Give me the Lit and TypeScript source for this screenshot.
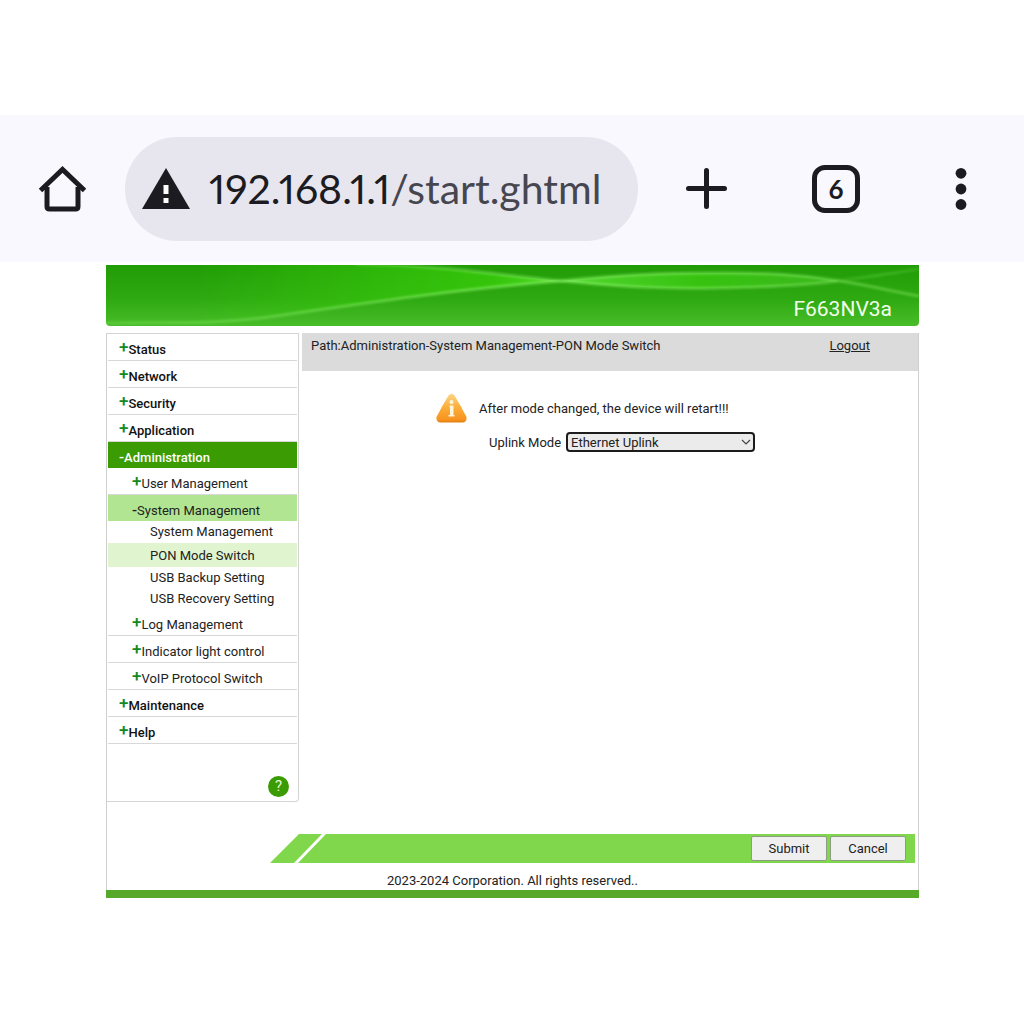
import { LitElement, html, css, svg, nothing } from "lit";
import { customElement, state } from "lit/decorators.js";
import { classMap } from "lit/directives/class-map.js";

interface NavItem {
  label: string;
  level: 1 | 2 | 3;
  open?: boolean;
  current?: boolean;
}

const NAV: NavItem[] = [
  { label: "Status", level: 1 },
  { label: "Network", level: 1 },
  { label: "Security", level: 1 },
  { label: "Application", level: 1 },
  { label: "Administration", level: 1, open: true },
  { label: "User Management", level: 2 },
  { label: "System Management", level: 2, open: true },
  { label: "System Management", level: 3 },
  { label: "PON Mode Switch", level: 3, current: true },
  { label: "USB Backup Setting", level: 3 },
  { label: "USB Recovery Setting", level: 3 },
  { label: "Log Management", level: 2 },
  { label: "Indicator light control", level: 2 },
  { label: "VoIP Protocol Switch", level: 2 },
  { label: "Maintenance", level: 1 },
  { label: "Help", level: 1 },
];

@customElement("browser-bar")
export class BrowserBar extends LitElement {
  static styles = css`
    :host {
      display: block;
      background: #f9f8fe;
    }
    .bar {
      display: flex;
      align-items: center;
      padding: 22px 44px 21px 38px;
    }
    button {
      display: grid;
      place-items: center;
      flex: none;
      width: 48px;
      height: 48px;
      margin: 0;
      padding: 0;
      border: 0;
      background: none;
      color: #1b1b21;
    }
    svg {
      display: block;
    }
    .address {
      display: flex;
      align-items: center;
      flex: 1;
      min-width: 0;
      height: 104px;
      box-sizing: border-box;
      margin: 0 44px 0 39px;
      padding: 0 16px;
      gap: 18px;
      border-radius: 52px;
      background: #e7e6ef;
      color: #1b1b21;
    }
    .address svg {
      flex: none;
    }
    .url {
      font: 400 41px/52px Lato, "Liberation Sans", sans-serif;
      font-variant-numeric: proportional-nums;
      white-space: nowrap;
    }
    .path {
      color: #46464f;
    }
    .actions {
      display: flex;
      gap: 82px;
    }
    .tabs {
      box-sizing: border-box;
      border: 5px solid #1b1b21;
      border-radius: 13px;
      font: 700 26px/30px Lato, "Liberation Sans", sans-serif;
    }
    .more {
      width: 38px;
    }
  `;

  render() {
    return html`
      <div class="bar">
        <button aria-label="Home">
          <svg width="48" height="48" viewBox="0 0 48 48" fill="none" stroke="currentColor" stroke-width="5">
            <path d="M9 22V41.5Q9 44 11.500 44H37.500Q40 44 40 41.500V22" />
            <path d="M2.500 25.500L24.500 4.500L46.500 25.500" stroke-linejoin="miter" />
          </svg>
        </button>
        <div class="address">
          <svg width="50" height="42" viewBox="0 0 50 42">
            <path d="M25 0L49 41H1Z" fill="currentColor" />
            <path d="M22.500 17h5v9h-5zM22.500 30h5v5h-5z" fill="#fff" />
          </svg>
          <span class="url">192.168.1.1<span class="path">/start.ghtml</span></span>
        </div>
        <div class="actions">
          <button aria-label="New tab">
            <svg width="48" height="48" viewBox="0 0 48 48" stroke="currentColor" stroke-width="5" stroke-linecap="round">
              <path d="M24.500 5.500V41.500M6.500 23.500H42.500" />
            </svg>
          </button>
          <button class="tabs">6</button>
          <button class="more" aria-label="Menu">
            <svg width="12" height="48" viewBox="0 0 12 48" fill="currentColor">
              <circle cx="6" cy="8.300" r="5.400" />
              <circle cx="6" cy="24" r="5.400" />
              <circle cx="6" cy="39.500" r="5.400" />
            </svg>
          </button>
        </div>
      </div>
    `;
  }
}

@customElement("device-banner")
export class DeviceBanner extends LitElement {
  static styles = css`
    :host {
      display: grid;
      height: 61px;
      overflow: hidden;
      border-radius: 0 0 4px 4px;
      background: linear-gradient(#219c06, #2ea911 55%, #48bd29);
    }
    svg,
    .model {
      grid-area: 1 / 1;
    }
    svg {
      width: 100%;
      height: 61px;
    }
    .model {
      place-self: end;
      padding: 0 27px 4px;
      color: #f2ffec;
      font: 400 21px/26px Roboto, "Liberation Sans", sans-serif;
    }
  `;

  render() {
    const rise = "C60 57 110 60 170 51C260 38 350 24 455 16";
    return html`
      <svg viewBox="0 0 813 61" preserveAspectRatio="none" aria-hidden="true">
        ${svg`
          <defs>
            <linearGradient id="left" x1="0" x2="1">
              <stop offset="0.200" stop-color="#38cc0a" stop-opacity="0" />
              <stop offset="0.850" stop-color="#36c80a" stop-opacity="0.900" />
              <stop offset="1" stop-color="#4fdc28" />
            </linearGradient>
            <linearGradient id="lens" x1="0" x2="1">
              <stop offset="0" stop-color="#52d630" />
              <stop offset="0.500" stop-color="#36c20f" />
              <stop offset="1" stop-color="#3cb81e" />
            </linearGradient>
            <linearGradient id="line" x1="0" x2="1">
              <stop offset="0" stop-color="#7be05a" stop-opacity="0.400" />
              <stop offset="0.500" stop-color="#7be85a" stop-opacity="0.700" />
              <stop offset="1" stop-color="#7be05a" stop-opacity="0.500" />
            </linearGradient>
            <filter id="soft"><feGaussianBlur stdDeviation="0.900" /></filter>
          </defs>
          <path d="M0 58${rise}C400 12 340 0 250 0H0Z" fill="url(#left)" />
          <path d="M455 16C520 9 560 8 620 8C680 8 710 11 732 16C710 19 670 22 610 23C560 24 520 22 455 16Z" fill="url(#lens)" />
          <g fill="none" stroke="url(#line)" stroke-width="3" filter="url(#soft)">
            <path d="M0 58${rise}C520 9 560 8 620 8C680 8 710 12 740 17C770 22 795 28 813 31" />
            <path d="M250 -1C340 0 400 11 455 16C520 22 560 24 610 23C670 22 710 19 732 16" />
            <path d="M732 16C760 12 790 8 813 4" stroke-opacity="0.400" />
          </g>
        `}
      </svg>
      <span class="model">F663NV3a</span>
    `;
  }
}

@customElement("side-nav")
export class SideNav extends LitElement {
  static styles = css`
    :host {
      display: block;
      box-sizing: border-box;
      border: 1px solid #d4d4d4;
      border-left: 0;
      border-radius: 0 0 4px 0;
      font: 400 13px/15px Roboto, "Liberation Sans", sans-serif;
    }
    ul {
      margin: 0;
      padding: 0;
      list-style: none;
    }
    a {
      display: flex;
      align-items: center;
      box-sizing: border-box;
      min-height: 27px;
      margin: 0 1px;
      border-bottom: 1px solid #d8d8d8;
      color: #222;
      text-decoration: none;
    }
    .level1 {
      padding-left: 11px;
      color: #111;
      font-weight: 500;
    }
    .level2 {
      padding-left: 24px;
    }
    .level3 {
      min-height: 21px;
      padding-left: 42px;
      border-bottom: 0;
    }
    .label {
      padding-top: 4px;
    }
    .level3 .label {
      padding-top: 0;
    }
    .sign {
      color: #128a1f;
      font-size: 17px;
      font-weight: 500;
    }
    .level1.open {
      min-height: 26px;
      border-bottom: 0;
      background: #3a9c02;
      color: #fff;
    }
    .level2.open {
      min-height: 26px;
      border-bottom: 0;
      background: #b2e592;
    }
    .open .sign {
      color: inherit;
      font-size: 15px;
    }
    .current {
      min-height: 24px;
      margin: 1px 1px 0;
      background: #e0f4d0;
    }
    .help {
      display: flex;
      justify-content: flex-end;
      padding: 32px 9px 4px;
    }
    .help button {
      width: 21px;
      height: 21px;
      padding: 0;
      border: 0;
      border-radius: 50%;
      background: #3a9c02;
      color: #e2f8d4;
      font: 400 15px/21px Roboto, "Liberation Sans", sans-serif;
    }
  `;

  render() {
    return html`
      <nav>
        <ul>
          ${NAV.map(
            (item) => html`
              <li>
                <a
                  href="#"
                  class=${classMap({
                    [`level${item.level}`]: true,
                    open: !!item.open,
                    current: !!item.current,
                  })}
                >
                  ${item.level < 3
                    ? item.open
                      ? html`<span class="sign label">-</span>`
                      : html`<span class="sign">+</span>`
                    : nothing}
                  <span class="label">${item.label}</span>
                </a>
              </li>
            `
          )}
        </ul>
      </nav>
      <div class="help"><button>?</button></div>
    `;
  }
}

@customElement("app-root")
export class AppRoot extends LitElement {
  static styles = css`
    :host {
      display: block;
      min-height: 100vh;
      box-sizing: border-box;
      padding: 115px 0;
      background: #fff;
      color: #222;
      font: 400 13px/15px Roboto, "Liberation Sans", sans-serif;
    }
    .page {
      margin: 3px 105px 0 106px;
    }
    .frame {
      margin-top: 7px;
      border: solid #cfcfcf;
      border-width: 0 1px;
    }
    .columns {
      display: grid;
      grid-template-columns: 192px 1fr;
      align-items: start;
      gap: 3px;
    }
    .path-bar {
      display: flex;
      justify-content: space-between;
      height: 38px;
      box-sizing: border-box;
      padding: 5px 48px 0 9px;
      background: #dbdbdb;
    }
    .path-bar a {
      color: #222;
    }
    .form {
      padding: 22px 134px;
    }
    .notice {
      display: flex;
      align-items: center;
      gap: 12px;
    }
    .notice svg {
      flex: none;
    }
    .field {
      display: flex;
      align-items: center;
      gap: 5px;
      margin-top: 8px;
      padding-left: 53px;
    }
    .picker {
      display: grid;
      align-items: center;
      width: 189px;
    }
    .picker select,
    .picker svg {
      grid-area: 1 / 1;
    }
    .picker svg {
      justify-self: end;
      margin-right: 4px;
      pointer-events: none;
    }
    select {
      appearance: none;
      width: 100%;
      height: 20px;
      margin: 0;
      padding: 0 20px 0 3px;
      border: 2px solid #1c1c1c;
      border-radius: 4px;
      background: #ebebeb;
      color: #222;
      font: inherit;
    }
    .buttons {
      display: flex;
      margin: 32px 3px 0 163px;
    }
    .slant {
      display: block;
      flex: none;
    }
    .fill {
      display: flex;
      flex: 1;
      align-items: center;
      justify-content: flex-end;
      gap: 3px;
      height: 29px;
      padding-right: 9px;
      background: #80d74b;
    }
    .fill button {
      width: 76px;
      height: 25px;
      padding: 0;
      border: 1px solid #8d9d84;
      border-radius: 2px;
      background: #efefef;
      color: #222;
      font: inherit;
    }
    footer {
      padding: 10px 0 2px;
      text-align: center;
    }
    .base {
      height: 8px;
      background: #57a929;
    }
  `;

  @state() private mode = "Ethernet Uplink";

  private pick(e: Event) {
    this.mode = (e.target as HTMLSelectElement).value;
  }

  render() {
    return html`
      <browser-bar></browser-bar>
      <div class="page">
        <device-banner></device-banner>
        <div class="frame">
          <div class="columns">
            <side-nav></side-nav>
            <main>
              <div class="path-bar">
                <span>Path:Administration-System Management-PON Mode Switch</span>
                <a href="#">Logout</a>
              </div>
              <div class="form">
                <div class="notice">
                  <svg width="31" height="31" viewBox="0 0 31 31" aria-hidden="true">
                    <defs>
                      <linearGradient id="amber" x1="0" y1="0" x2="0" y2="1">
                        <stop offset="0" stop-color="#fbd68a" />
                        <stop offset="0.450" stop-color="#fbb03c" />
                        <stop offset="0.900" stop-color="#f7941e" />
                        <stop offset="1" stop-color="#e07f10" />
                      </linearGradient>
                    </defs>
                    <path
                      d="M12.500 2.500Q15.500 -1 18.500 2.500Q25 13 30.500 24Q31 29.500 26.500 29.500H4.500Q0 29.500 .500 24Q6 13 12.500 2.500Z"
                      fill="url(#amber)"
                    />
                    <circle cx="15.500" cy="9" r="2" fill="#fff4dc" />
                    <path d="M13.500 12.500H17.500V22H18.500V23.500H12.500V22H14V14H13.500Z" fill="#fff4dc" />
                  </svg>
                  <span>After mode changed, the device will retart!!!</span>
                </div>
                <div class="field">
                  <label for="mode">Uplink Mode</label>
                  <div class="picker">
                    <select id="mode" .value=${this.mode} @change=${this.pick}>
                      <option>Ethernet Uplink</option>
                      <option>PON Uplink</option>
                    </select>
                    <svg width="10" height="8" viewBox="0 0 10 8" fill="none" stroke="#444" stroke-width="1.200">
                      <path d="M1 2L5 6L9 2" />
                    </svg>
                  </div>
                </div>
              </div>
            </main>
          </div>
          <div class="buttons">
            <svg class="slant" width="58" height="29" viewBox="0 0 58 29" fill="#80d74b" aria-hidden="true">
              <path d="M29 0H52L24 29H0Z" />
              <path d="M56 0H58V29H28Z" />
            </svg>
            <div class="fill">
              <button>Submit</button>
              <button>Cancel</button>
            </div>
          </div>
          <footer>2023-2024 Corporation. All rights reserved..</footer>
        </div>
        <div class="base"></div>
      </div>
    `;
  }
}
